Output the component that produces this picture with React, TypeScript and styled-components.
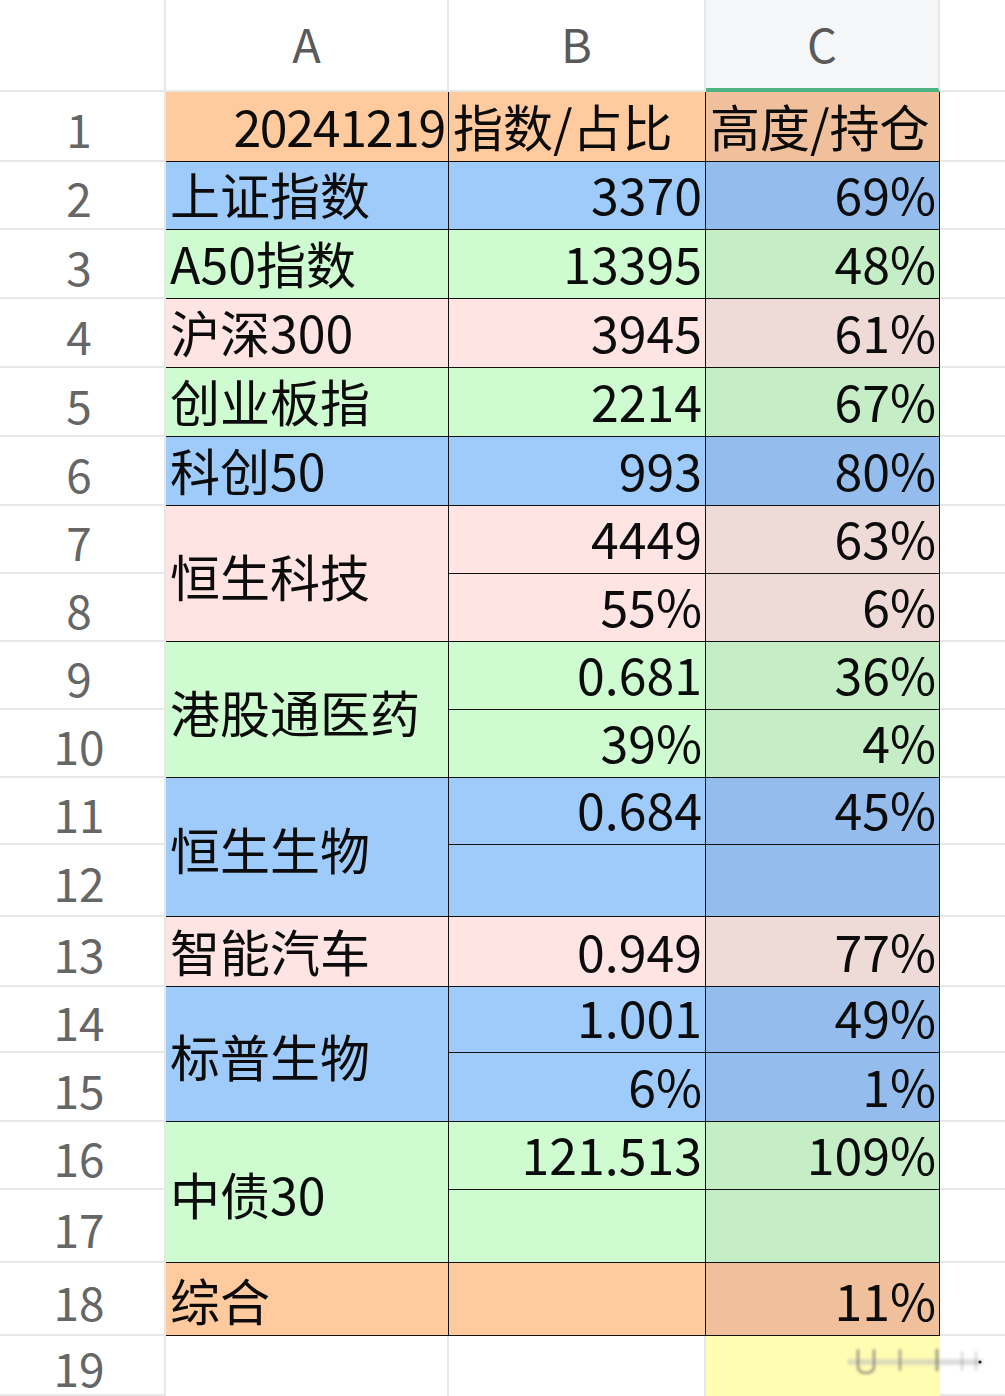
import React from 'react';
import styled, { createGlobalStyle, css } from 'styled-components';

const GlobalStyle = createGlobalStyle`
  html, body { margin: 0; padding: 0; background: #ffffff; }
  body { font-family: "Noto Sans CJK SC", "Noto Sans", sans-serif; }
  *, *::before, *::after { box-sizing: border-box; }
`;

const ROW_HEIGHTS = [92, 70, 68, 69, 69, 69, 69, 68, 68, 68, 68, 67, 72, 70, 66, 69, 68, 73, 73, 60];
const GRID_GRAY = '#e7e7e7';

type Tone = 'orange' | 'blue' | 'green' | 'pink' | 'yellow' | 'white';

const TONES: Record<Tone, [string, string]> = {
  orange: ['#ffcb9e', '#efc09b'],
  blue: ['#9fcbfa', '#94bdee'],
  green: ['#cffbd1', '#c5eec7'],
  pink: ['#fee4e3', '#eedad6'],
  yellow: ['#ffffff', '#fffdb2'],
  white: ['#ffffff', '#ffffff'],
};

const Sheet = styled.div`
  position: relative;
  display: grid;
  grid-template-columns: 166px 283px 257px 234px 65px;
  grid-template-rows: ${ROW_HEIGHTS.map((h) => `${h}px`).join(' ')};
  width: 1005px;
  height: 1396px;
  overflow: hidden;
  font-family: "Noto Sans CJK SC", "Noto Sans", sans-serif;
`;

const Corner = styled.div`
  grid-column: 1;
  grid-row: 1;
  border-right: 2px solid ${GRID_GRAY};
  border-bottom: 2px solid ${GRID_GRAY};
  background: #ffffff;
`;

const ColHeader = styled.div<{ $col: number; $selected?: boolean }>`
  grid-column: ${(p) => p.$col};
  grid-row: 1;
  display: flex;
  align-items: center;
  justify-content: center;
  font-size: 47px;
  line-height: 1;
  color: #5a5a5a;
  background: ${(p) => (p.$selected ? '#f5f6f8' : '#ffffff')};
  border-right: 2px solid ${GRID_GRAY};
  border-bottom: ${(p) => (p.$selected ? '4px solid #4db380' : `2px solid ${GRID_GRAY}`)};
  padding-bottom: ${(p) => (p.$selected ? '4px' : '6px')};
`;

const RowHeader = styled.div<{ $row: number }>`
  grid-column: 1;
  grid-row: ${(p) => p.$row};
  display: flex;
  align-items: center;
  justify-content: center;
  padding: 4px 6px 0 0;
  font-size: 46px;
  line-height: 1;
  color: #666666;
  border-right: 2px solid ${GRID_GRAY};
  border-bottom: 2px solid ${GRID_GRAY};
`;

const ExtraCell = styled.div<{ $row: number }>`
  grid-column: 5;
  grid-row: ${(p) => p.$row};
  border-bottom: 2px solid ${GRID_GRAY};
  background: #ffffff;
`;

const DataCell = styled.div<{
  $col: number;
  $row: number;
  $span?: number;
  $tone: Tone;
  $align: 'left' | 'right';
  $center?: boolean;
  $plain?: boolean;
}>`
  grid-column: ${(p) => p.$col};
  grid-row: ${(p) => `${p.$row} / span ${p.$span ?? 1}`};
  display: flex;
  align-items: ${(p) => (p.$center ? 'center' : 'flex-end')};
  justify-content: ${(p) => (p.$align === 'right' ? 'flex-end' : 'flex-start')};
  padding: ${(p) => (p.$center ? '2px 3px 0 4px' : '0 3px 11px 4px')};
  font-size: 50px;
  line-height: 1;
  color: #0c0c0c;
  white-space: nowrap;
  background: ${(p) => TONES[p.$tone][p.$col === 4 ? 1 : 0]};
  ${(p) =>
    p.$plain
      ? css`
          border-right: ${p.$col === 4 ? 'none' : `2px solid ${GRID_GRAY}`};
          border-bottom: none;
        `
      : css`
          border-right: 1px solid #111111;
          border-bottom: 1px solid #111111;
        `}
`;

const DateText = styled.span`
  letter-spacing: -1.3px;
`;

const Smudge = styled.svg`
  position: absolute;
  left: 840px;
  top: 1338px;
  width: 160px;
  height: 50px;
  pointer-events: none;
`;

type Block = {
  row: number;
  span: number;
  tone: Tone;
  a: string;
  aRight?: boolean;
  bLeft?: boolean;
  b: string[];
  c: string[];
};

const BLOCKS: Block[] = [
  { row: 2, span: 1, tone: 'orange', a: '20241219', aRight: true, bLeft: true, b: ['指数/占比'], c: ['高度/持仓'] },
  { row: 3, span: 1, tone: 'blue', a: '上证指数', b: ['3370'], c: ['69%'] },
  { row: 4, span: 1, tone: 'green', a: 'A50指数', b: ['13395'], c: ['48%'] },
  { row: 5, span: 1, tone: 'pink', a: '沪深300', b: ['3945'], c: ['61%'] },
  { row: 6, span: 1, tone: 'green', a: '创业板指', b: ['2214'], c: ['67%'] },
  { row: 7, span: 1, tone: 'blue', a: '科创50', b: ['993'], c: ['80%'] },
  { row: 8, span: 2, tone: 'pink', a: '恒生科技', b: ['4449', '55%'], c: ['63%', '6%'] },
  { row: 10, span: 2, tone: 'green', a: '港股通医药', b: ['0.681', '39%'], c: ['36%', '4%'] },
  { row: 12, span: 2, tone: 'blue', a: '恒生生物', b: ['0.684', ''], c: ['45%', ''] },
  { row: 14, span: 1, tone: 'pink', a: '智能汽车', b: ['0.949'], c: ['77%'] },
  { row: 15, span: 2, tone: 'blue', a: '标普生物', b: ['1.001', '6%'], c: ['49%', '1%'] },
  { row: 17, span: 2, tone: 'green', a: '中债30', b: ['121.513', ''], c: ['109%', ''] },
  { row: 19, span: 1, tone: 'orange', a: '综合', b: [''], c: ['11%'] },
];

export default function App() {
  const rowNumbers = Array.from({ length: 19 }, (_, i) => i + 1);
  return (
    <>
      <GlobalStyle />
      <Sheet>
        <Corner />
        <ColHeader $col={2}>A</ColHeader>
        <ColHeader $col={3}>B</ColHeader>
        <ColHeader $col={4} $selected>C</ColHeader>
        <ExtraCell $row={1} />

        {rowNumbers.map((n) => (
          <React.Fragment key={`r${n}`}>
            <RowHeader $row={n + 1}>{n}</RowHeader>
            <ExtraCell $row={n + 1} />
          </React.Fragment>
        ))}

        {BLOCKS.map((blk) => (
          <React.Fragment key={`b${blk.row}`}>
            <DataCell
              $col={2}
              $row={blk.row}
              $span={blk.span}
              $tone={blk.tone}
              $align={blk.aRight ? 'right' : 'left'}
              $center={blk.span > 1}
            >
              {blk.aRight ? <DateText>{blk.a}</DateText> : blk.a}
            </DataCell>
            {blk.b.map((t, i) => (
              <DataCell
                key={`b${i}`}
                $col={3}
                $row={blk.row + i}
                $tone={blk.tone}
                $align={blk.bLeft ? 'left' : 'right'}
              >
                {t}
              </DataCell>
            ))}
            {blk.c.map((t, i) => (
              <DataCell
                key={`c${i}`}
                $col={4}
                $row={blk.row + i}
                $tone={blk.tone}
                $align={blk.bLeft ? 'left' : 'right'}
              >
                {t}
              </DataCell>
            ))}
          </React.Fragment>
        ))}

        <DataCell $col={2} $row={20} $tone="white" $align="left" $plain />
        <DataCell $col={3} $row={20} $tone="white" $align="left" $plain />
        <DataCell $col={4} $row={20} $tone="yellow" $align="left" $plain />

        <Smudge viewBox="0 0 160 50">
          <defs>
            <filter id="blur" x="-20%" y="-50%" width="140%" height="200%">
              <feGaussianBlur stdDeviation="1.6" />
            </filter>
          </defs>
          <g filter="url(#blur)" stroke="#6b6b6b" fill="none" strokeLinecap="round">
            <path d="M10 24 L140 24" stroke="#bdbdbd" strokeWidth="6" opacity="0.5" />
            <path d="M18 12 L18 28 Q18 35 26 35 Q34 35 34 28 L34 12" strokeWidth="2.2" opacity="0.8" />
            <path d="M60 12 L60 32" strokeWidth="2.2" opacity="0.7" />
            <path d="M97 12 L97 32" strokeWidth="2.6" opacity="0.75" />
            <path d="M122 14 L122 32" strokeWidth="1.6" opacity="0.4" />
            <path d="M136 14 L136 32" strokeWidth="1.6" opacity="0.4" />
          </g>
          <circle cx="140" cy="24" r="1.6" fill="#222" />
        </Smudge>
      </Sheet>
    </>
  );
}
